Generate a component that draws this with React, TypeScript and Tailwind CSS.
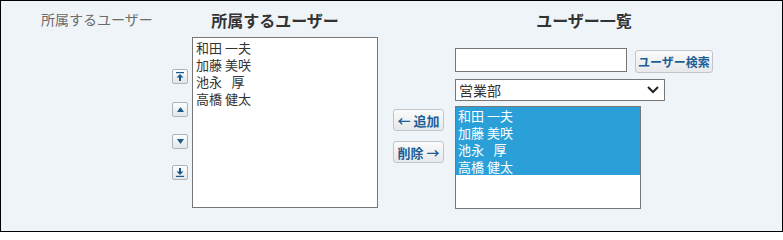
import React from "react";

const font = { fontFamily: '"Noto Sans CJK JP", "Noto Sans", sans-serif' };

function SmallBtn({ children, className = "" }: { children: React.ReactNode; className?: string }) {
  return (
    <div
      className={
        "w-[16px] h-[15px] border border-[#aeb4ba] rounded-[2px] bg-gradient-to-b from-[#fdfdfd] to-[#e4e6e8] flex items-center justify-center " +
        className
      }
    >
      {children}
    </div>
  );
}

function Btn({ children, className = "" }: { children: React.ReactNode; className?: string }) {
  return (
    <div
      className={
        "border border-[#c2c6ca] rounded-[3px] bg-gradient-to-b from-[#fbfbfb] to-[#e6e8ea] flex items-center justify-center font-bold text-[#1d5e96] leading-none whitespace-nowrap " +
        className
      }
    >
      {children}
    </div>
  );
}

const users = ["和田 一夫", "加藤 美咲", "池永\u2002 厚", "高橋 健太"];

export default function App() {
  return (
    <div
      className="w-[783px] h-[232px] border border-black bg-[#eff4f8] flex items-start"
      style={font}
    >
      <div className="w-[171px] pl-[40px] pt-[9px] text-[14px] leading-[18px] text-[#6b6b6b]">
        所属するユーザー
      </div>

      <div className="w-[206px] flex flex-col">
        <div className="pt-[9px] h-[29px] leading-[20px] mb-[7px] text-center text-[16px] font-bold text-[#333]">
          所属するユーザー
        </div>
        <div className="flex">
          <div className="w-[16px] mr-[4px] flex flex-col">
            <SmallBtn className="mt-[32px]">
              <svg width="8" height="9" viewBox="0 0 8 9">
                <rect x="0" y="0" width="8" height="1.2" fill="#1a5a8a" />
                <polygon points="4,2 7.5,5.5 0.5,5.5" fill="#1a5a8a" />
                <rect x="3" y="5" width="2" height="4" fill="#1a5a8a" />
              </svg>
            </SmallBtn>
            <SmallBtn className="mt-[18px]">
              <svg width="7" height="5" viewBox="0 0 7 5">
                <polygon points="3.5,0 7,5 0,5" fill="#1a5a8a" />
              </svg>
            </SmallBtn>
            <SmallBtn className="mt-[17px]">
              <svg width="7" height="5" viewBox="0 0 7 5">
                <polygon points="0,0 7,0 3.5,5" fill="#1a5a8a" />
              </svg>
            </SmallBtn>
            <SmallBtn className="mt-[16px]">
              <svg width="8" height="9" viewBox="0 0 8 9">
                <rect x="3" y="0" width="2" height="4" fill="#1a5a8a" />
                <polygon points="0.5,3.5 7.5,3.5 4,7" fill="#1a5a8a" />
                <rect x="0" y="7.8" width="8" height="1.2" fill="#1a5a8a" />
              </svg>
            </SmallBtn>
          </div>
          <div className="w-[186px] h-[171px] border border-[#777] bg-white px-[3px] pt-[1px]">
            {users.map((u) => (
              <div key={u} className="text-[13px] leading-[17px] text-[#333] whitespace-pre">
                {u}
              </div>
            ))}
          </div>
        </div>
      </div>

      <div className="ml-[15px] w-[51px] pt-[108px] flex flex-col">
        <Btn className="h-[22px] text-[13px]">← 追加</Btn>
        <Btn className="h-[22px] mt-[10px] text-[13px]">削除 →</Btn>
      </div>

      <div className="ml-[11px] w-[258px] flex flex-col">
        <div className="pt-[9px] h-[29px] leading-[20px] text-center text-[16px] font-bold text-[#333]">
          ユーザー一覧
        </div>
        <div className="flex items-start mt-[18px]">
          <div className="w-[172px] h-[24px] border border-[#777] bg-white" />
          <Btn className="ml-[8px] mt-[2px] w-[78px] h-[23px] text-[12px]">ユーザー検索</Btn>
        </div>
        <div className="mt-[6px] w-[210px] h-[22px] border border-[#777] bg-white flex items-center justify-between pl-[3px] pr-[5px]">
          <span className="text-[14px] leading-[20px] text-[#333]">営業部</span>
          <svg width="12" height="8" viewBox="0 0 12 8">
            <polyline points="1,1 6,6 11,1" fill="none" stroke="#222" strokeWidth="2" />
          </svg>
        </div>
        <div className="mt-[5px] w-[186px] h-[103px] border border-[#777] bg-white">
          <div className="bg-[#2a9fd8]">
            {users.map((u) => (
              <div key={u} className="text-[13px] leading-[17px] text-white px-[2px] whitespace-pre">
                {u}
              </div>
            ))}
          </div>
        </div>
      </div>
    </div>
  );
}
